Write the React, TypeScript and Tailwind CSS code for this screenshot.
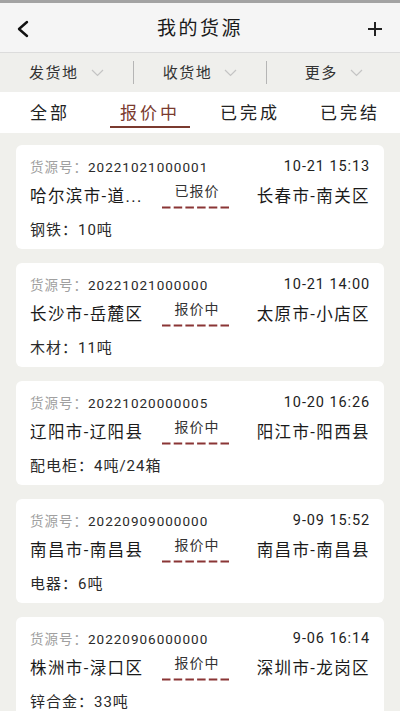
import React from "react";

type Cargo = {
  id: string;
  time: string;
  from: string;
  to: string;
  status: string;
  goods: string;
};

const CARGO: Cargo[] = [
  { id: "20221021000001", time: "10-21 15:13", from: "哈尔滨市-道...", to: "长春市-南关区", status: "已报价", goods: "钢铁：10吨" },
  { id: "20221021000000", time: "10-21 14:00", from: "长沙市-岳麓区", to: "太原市-小店区", status: "报价中", goods: "木材：11吨" },
  { id: "20221020000005", time: "10-20 16:26", from: "辽阳市-辽阳县", to: "阳江市-阳西县", status: "报价中", goods: "配电柜：4吨/24箱" },
  { id: "20220909000000", time: "9-09 15:52", from: "南昌市-南昌县", to: "南昌市-南昌县", status: "报价中", goods: "电器：6吨" },
  { id: "20220906000000", time: "9-06 16:14", from: "株洲市-渌口区", to: "深圳市-龙岗区", status: "报价中", goods: "锌合金：33吨" },
];

const FILTERS = ["发货地", "收货地", "更多"];
const TABS = ["全部", "报价中", "已完成", "已完结"];

function Chevron() {
  return (
    <svg width="13" height="8" viewBox="0 0 13 8" fill="none">
      <path d="M1 1l5.5 5.5L12 1" stroke="#c4c4c4" strokeWidth="1.2" />
    </svg>
  );
}

function CargoCard({ c }: { c: Cargo }) {
  return (
    <div className="shrink-0 rounded-md bg-white px-[14px] pt-3 pb-[9px]">
      <div className="flex h-5 items-center justify-between">
        <div className="text-[13.5px] tracking-[1px]">
          <span className="text-[#a0a0a0]">货源号：</span>
          <span className="text-[#2a2a2a]">{c.id}</span>
        </div>
        <span className="text-[14.5px] tracking-[0.9px] text-[#222]">{c.time}</span>
      </div>
      <div className="mt-2 flex h-6 items-center text-[16.5px] tracking-[1.4px] text-[#1a1a1a]">
        <span className="w-[132px] truncate">{c.from}</span>
        <div className="-mt-[3px] flex w-[70px] flex-col items-center self-start">
          <span className="text-[14px] leading-[18px] tracking-[1px] text-[#333]">{c.status}</span>
          <svg className="mt-[6px]" width="70" height="3" viewBox="0 0 70 3">
            <line x1="0" y1="1.5" x2="70" y2="1.5" stroke="#8a3535" strokeWidth="2.2" strokeDasharray="8.5 3.2" />
          </svg>
        </div>
        <span className="flex-1 text-right">{c.to}</span>
      </div>
      <div className="mt-[11px] flex h-5 items-center text-[15px] tracking-[1px] text-[#2a2a2a]">{c.goods}</div>
    </div>
  );
}

export default function App() {
  return (
    <div
      className="flex h-[711px] w-[400px] flex-col overflow-hidden bg-[#f0f0ec]"
      style={{ fontFamily: 'Roboto, "Noto Sans CJK SC", sans-serif' }}
    >
      <div className="h-[3px] shrink-0 bg-[#a3a3a3]" />
      <header className="relative flex h-[50px] shrink-0 items-center justify-center border-b border-[#dcdcdc] bg-[#f5f5f5]">
        <svg className="absolute left-[15px] top-[17px]" width="16" height="18" viewBox="0 0 16 18" fill="none">
          <path d="M12 2L4 9l8 7" stroke="#111" strokeWidth="2.4" strokeLinecap="round" strokeLinejoin="round" />
        </svg>
        <h1 className="mt-[3px] text-[19px] tracking-[2.5px] text-[#1a1a1a]">我的货源</h1>
        <svg className="absolute right-[17px] top-[18px]" width="16" height="16" viewBox="0 0 16 16" fill="none">
          <path d="M8 1v14M1 8h14" stroke="#222" strokeWidth="2" />
        </svg>
      </header>
      <div className="flex h-[39px] shrink-0 items-center bg-[#efefec]">
        {FILTERS.map((f, i) => (
          <div
            key={f}
            className={
              "flex flex-1 items-center justify-center gap-[12px] " +
              (i > 0 ? "border-l border-[#b5b5b5]" : "")
            }
          >
            <span className="mt-[1px] text-[15px] tracking-[1.5px] text-[#333]">{f}</span>
            <Chevron />
          </div>
        ))}
      </div>
      <nav className="grid h-[41px] shrink-0 grid-cols-4 bg-white">
        {TABS.map((t, i) => (
          <div key={t} className="relative flex items-center justify-center">
            <span
              className={
                "mt-[3px] text-[17px] tracking-[3px] " +
                (i === 1 ? "text-[#7a3a2f]" : "text-[#222]")
              }
            >
              {t}
            </span>
            {i === 1 && (
              <div className="absolute bottom-[5px] left-[10px] right-[10px] h-[2px] bg-[#7a3a2f]" />
            )}
          </div>
        ))}
      </nav>
      <main className="flex flex-col gap-[14px] px-4 pt-[12px]">
        {CARGO.map((c) => (
          <CargoCard key={c.id} c={c} />
        ))}
      </main>
    </div>
  );
}
